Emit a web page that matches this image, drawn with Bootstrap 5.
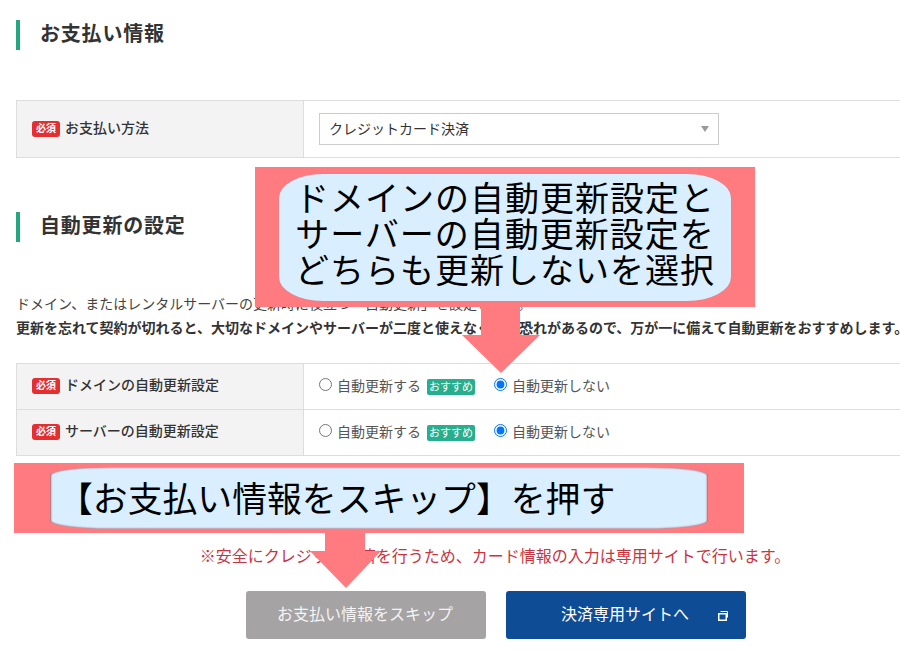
<!DOCTYPE html>
<html lang="ja">
<head>
<meta charset="utf-8">
<title>お支払い情報</title>
<link rel="stylesheet" href="https://cdn.jsdelivr.net/npm/bootstrap@5.3.0/dist/css/bootstrap.min.css">
<style>
html, body { overflow: hidden; height: 662px; }
body { font-family: "Liberation Sans", "Noto Sans CJK JP", sans-serif; color: #333; font-size: 14px; background: #fff; position: relative; }
.pay-wrap { width: 960px; margin-left: 16px; padding-top: 20px; }
.sec-title { border-left: 4px solid #21a87f; height: 30px; padding-left: 20px; font-size: 20px; letter-spacing: .8px; font-weight: 700; line-height: 29px; margin: 0; color: #333; }
.pay-table { table-layout: fixed; --bs-table-border-color: #ddd; margin: 0; color: #333; font-size: 14px; }
.method-table { margin: 50px 0 54px; }
.pay-table th { width: 287px; background: #f3f3f3; font-weight: 500; padding: 0 15px; color: #333; white-space: nowrap; }
.pay-table td { padding: 0 15px; }
.row-tall { height: 57px; }
.row-tall th { padding-bottom: 2px; }
.row-mid { height: 46px; }
.row-mid th, .row-mid td { padding-bottom: 2px; }
.req-tag { display: inline-block; width: 28px; height: 16px; line-height: 16px; border-radius: 3px; background: #e52e2f; color: #fff; font-size: 10px; font-weight: 700; text-align: center; margin-right: 5px; vertical-align: 1px; }
.pay-select { width: 400px; height: 32px; padding: 0 9px; border: 1px solid #ccc; border-radius: 0; color: #333; font-size: 14px; background-size: 8px 6px; background-position: right 9px center; background-image: url("data:image/svg+xml,%3Csvg xmlns='http://www.w3.org/2000/svg' viewBox='0 0 8 6'%3E%3Cpath fill='%23999' d='M0 0h8L4 6z'/%3E%3C/svg%3E"); }
.desc-text { margin: 50px 0 23px; line-height: 24px; font-size: 14px; white-space: nowrap; color: #333; }
.desc-lead { color: #444; }
.opt-label { color: #555; font-size: 14px; line-height: 20px; }
.opt-label input { width: 13px; height: 13px; margin: 0 5px 2px 0; }
.rec-tag { display: inline-block; width: 48px; height: 16px; line-height: 16px; border-radius: 2px; background: #27ae8c; color: #fff; font-size: 11px; text-align: center; margin: 2px 19px 0 6px; }
.note-text { margin: 89px 0 22px; padding-right: 2px; text-align: center; color: #c9343f; font-size: 16px; line-height: 24px; }
.btn-pair { gap: 20px; }
.act-btn { width: 240px; height: 48px; border: 0; border-radius: 3px; color: #fff; font-size: 16px; line-height: 48px; padding: 0 2px 0 0; position: relative; }
.act-gray, .act-gray:hover { background: #a5a3a4; color: #f4f4f4; }
.act-blue, .act-blue:hover { background: #0f4c96; color: #fff; }
.act-icon { position: absolute; right: 18px; top: 20px; width: 10px; height: 10px; }
.callout { position: absolute; background: #ff7b7f; display: flex; align-items: center; justify-content: center; }
.callout-a { left: 255px; top: 167px; width: 500px; height: 140px; }
.callout-b { left: 14px; top: 463px; width: 730px; height: 70px; }
.bubble { background: #d9eeff; color: #000; font-family: "Noto Sans CJK JP", sans-serif; text-align: center; white-space: nowrap; }
.bubble-a { width: 452px; height: 127px; border-radius: 44px / 24px; font-size: 34px; letter-spacing: 1px; line-height: 36px; padding-top: 5px; box-shadow: 0 0 2px #c98a9a; }
.bubble-b { position: absolute; left: 36px; top: 4px; width: 658px; height: 62px; border-radius: 60px / 8px; font-size: 34.85px; line-height: 61px; text-align: left; padding-left: 8px; box-shadow: inset 1px 0 2px #b05a60, inset -1px 0 2px #b05a60; }
.down-arrow { position: absolute; }
.arrow-a { left: 462px; top: 307px; width: 78px; height: 67px; }
.arrow-b { left: 310px; top: 533px; width: 71px; height: 56px; }
</style>
</head>
<body>
<div class="pay-wrap">
  <h2 class="sec-title">お支払い情報</h2>
  <table class="table table-bordered align-middle pay-table method-table">
    <tr class="row-tall">
      <th><span class="req-tag">必須</span>お支払い方法</th>
      <td><select class="form-select pay-select"><option>クレジットカード決済</option></select></td>
    </tr>
  </table>
  <h2 class="sec-title">自動更新の設定</h2>
  <div class="desc-text">
    <div class="desc-lead">ドメイン、またはレンタルサーバーの更新時に役立つ「自動更新」を設定します。</div>
    <div class="fw-bold">更新を忘れて契約が切れると、大切なドメインやサーバーが二度と使えなくなる恐れがあるので、万が一に備えて自動更新をおすすめします。</div>
  </div>
  <table class="table table-bordered align-middle pay-table">
    <tr class="row-mid">
      <th><span class="req-tag">必須</span>ドメインの自動更新設定</th>
      <td><div class="d-flex align-items-center opt-label">
        <input type="radio" name="dom"><span>自動更新する</span><span class="rec-tag">おすすめ</span>
        <input type="radio" name="dom" checked><span>自動更新しない</span>
      </div></td>
    </tr>
    <tr class="row-mid">
      <th><span class="req-tag">必須</span>サーバーの自動更新設定</th>
      <td><div class="d-flex align-items-center opt-label">
        <input type="radio" name="srv"><span>自動更新する</span><span class="rec-tag">おすすめ</span>
        <input type="radio" name="srv" checked><span>自動更新しない</span>
      </div></td>
    </tr>
  </table>
  <p class="note-text">※安全にクレジット決済を行うため、カード情報の入力は専用サイトで行います。</p>
  <div class="d-flex justify-content-center btn-pair">
    <button type="button" class="btn act-btn act-gray">お支払い情報をスキップ</button>
    <button type="button" class="btn act-btn act-blue">決済専用サイトへ
      <svg class="act-icon" viewBox="0 0 10 10"><path fill="none" stroke="#fff" stroke-width="1" d="M2.5 .5h7v6"/><rect x=".75" y="2.75" width="7.5" height="6.5" fill="#0f4c96" stroke="#fff" stroke-width="1.5"/></svg>
    </button>
  </div>
</div>

<div class="callout callout-a">
  <div class="bubble bubble-a">ドメインの自動更新設定と<br>サーバーの自動更新設定を<br>どちらも更新しないを選択</div>
</div>
<svg class="down-arrow arrow-a" viewBox="0 0 78 67"><path fill="#ff7b7f" d="M19 0h39v28h20L39 66 0 28h19z"/></svg>
<div class="callout callout-b">
  <div class="bubble bubble-b">【お支払い情報をスキップ】を押す</div>
</div>
<svg class="down-arrow arrow-b" viewBox="0 0 71 56"><path fill="#ff7b7f" d="M15 0h40v18h16L36 55 0 18h15z"/></svg>
</body>
</html>
